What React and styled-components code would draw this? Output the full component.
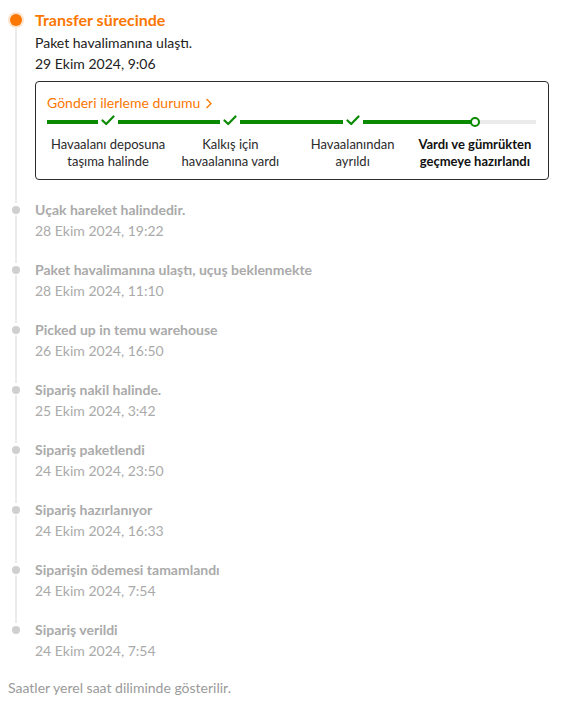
import styled, { createGlobalStyle } from 'styled-components';

const GlobalStyle = createGlobalStyle`
  body {
    margin: 0;
    background: #ffffff;
    font-family: 'Segoe UI', Lato, 'Open Sans', sans-serif;
  }
`;

const Page = styled.div`
  width: 561px;
  padding: 8px 0 0 8px;
  box-sizing: border-box;
`;

const Item = styled.div`
  position: relative;
  display: flex;
  gap: 11px;
  padding-bottom: ${(p) => (p.$first ? '19px' : p.$last ? '16px' : '18px')};

  &::before {
    content: '';
    display: ${(p) => (p.$last ? 'none' : 'block')};
    position: absolute;
    left: 7px;
    top: ${(p) => (p.$first ? '18px' : '16px')};
    bottom: -4px;
    width: 2px;
    background: #ebebeb;
  }
`;

const DotCol = styled.div`
  width: 16px;
  flex-shrink: 0;
  display: flex;
  justify-content: center;
  padding-top: ${(p) => (p.$active ? '6px' : '7px')};
`;

const Dot = styled.span`
  display: block;
  position: relative;
  z-index: 1;
  width: ${(p) => (p.$active ? '12px' : '8px')};
  height: ${(p) => (p.$active ? '12px' : '8px')};
  border-radius: 50%;
  background: ${(p) => (p.$active ? '#fb7701' : '#cfcfcf')};
  box-shadow: ${(p) => (p.$active ? '0 0 0 2px #fde3cc' : 'none')};
`;

const Body = styled.div`
  flex: 1;
  min-width: 0;
  padding-right: 12px;
`;

const ActiveTitle = styled.div`
  font-size: 16px;
  line-height: 24px;
  font-weight: 700;
  color: #fb7701;
`;

const Title = styled.div`
  font-size: 14px;
  line-height: 21px;
  font-weight: 700;
  color: #aaaaaa;
`;

const Line = styled.div`
  font-size: 14px;
  line-height: 21px;
  color: ${(p) => (p.$dark ? '#222222' : '#aaaaaa')};
`;

const Card = styled.div`
  margin-top: 7px;
  border: 1px solid #2b2b2b;
  border-radius: 4px;
  padding: 11px 12px 9px 11px;
`;

const CardHead = styled.div`
  display: flex;
  align-items: center;
  gap: 5px;
  font-size: 14px;
  line-height: 20px;
  color: #fb7701;
`;

const Steps = styled.div`
  display: grid;
  grid-template-columns: repeat(4, 1fr);
  margin-top: 4px;
`;

const Step = styled.div`
  display: flex;
  flex-direction: column;
  align-items: center;
`;

const Track = styled.div`
  position: relative;
  width: 100%;
  height: 10px;
  display: flex;
  justify-content: center;
  align-items: center;

  &::before,
  &::after {
    content: '';
    position: absolute;
    top: 3px;
    height: 4px;
  }
  &::before {
    left: 0;
    right: 50%;
    background: #0a8a00;
  }
  &::after {
    left: 50%;
    right: 0;
    background: ${(p) => (p.$done ? '#0a8a00' : '#ebebeb')};
  }
`;

const Check = styled.span`
  position: relative;
  z-index: 1;
  display: flex;
  align-items: center;
  justify-content: center;
  width: 20px;
  height: 14px;
  background: #ffffff;
  margin-top: -3px;
`;

const Ring = styled.span`
  position: relative;
  z-index: 1;
  width: 6px;
  height: 6px;
  border-radius: 50%;
  border: 2.5px solid #0a8a00;
  background: #ffffff;
`;

const StepLabel = styled.div`
  margin-top: 9px;
  text-align: center;
  white-space: nowrap;
  font-size: 13px;
  line-height: 17px;
  font-weight: ${(p) => (p.$current ? 700 : 400)};
  color: ${(p) => (p.$current ? '#111111' : '#2a2a2a')};
`;

const Note = styled.div`
  font-size: 14px;
  line-height: 21px;
  color: #9a9a9a;
`;

const steps = [
  { label: ['Havaalanı deposuna', 'taşıma halinde'] },
  { label: ['Kalkış için', 'havaalanına vardı'] },
  { label: ['Havaalanından', 'ayrıldı'] },
  { label: ['Vardı ve gümrükten', 'geçmeye hazırlandı'], current: true },
];

const history = [
  ['Uçak hareket halindedir.', '28 Ekim 2024, 19:22'],
  ['Paket havalimanına ulaştı, uçuş beklenmekte', '28 Ekim 2024, 11:10'],
  ['Picked up in temu warehouse', '26 Ekim 2024, 16:50'],
  ['Sipariş nakil halinde.', '25 Ekim 2024, 3:42'],
  ['Sipariş paketlendi', '24 Ekim 2024, 23:50'],
  ['Sipariş hazırlanıyor', '24 Ekim 2024, 16:33'],
  ['Siparişin ödemesi tamamlandı', '24 Ekim 2024, 7:54'],
  ['Sipariş verildi', '24 Ekim 2024, 7:54'],
];

const CheckIcon = () => (
  <svg width="14" height="11" viewBox="0 0 14 11">
    <polyline
      points="1.5,5.5 5.2,9 12.5,1.5"
      fill="none"
      stroke="#0a8a00"
      strokeWidth="2.2"
      strokeLinecap="round"
      strokeLinejoin="round"
    />
  </svg>
);

const Chevron = () => (
  <svg width="7" height="11" viewBox="0 0 7 11">
    <polyline
      points="1.5,1 6,5.5 1.5,10"
      fill="none"
      stroke="#fb7701"
      strokeWidth="1.3"
    />
  </svg>
);

const App = () => {
  return (
    <Page>
      <GlobalStyle />
      <Item $first>
        <DotCol $active>
          <Dot $active />
        </DotCol>
        <Body>
          <ActiveTitle>Transfer sürecinde</ActiveTitle>
          <Line $dark>Paket havalimanına ulaştı.</Line>
          <Line $dark>29 Ekim 2024, 9:06</Line>
          <Card>
            <CardHead>
              Gönderi ilerleme durumu <Chevron />
            </CardHead>
            <Steps>
              {steps.map((s, i) => (
                <Step key={i}>
                  <Track $done={!s.current}>
                    {s.current ? (
                      <Ring />
                    ) : (
                      <Check>
                        <CheckIcon />
                      </Check>
                    )}
                  </Track>
                  <StepLabel $current={s.current}>
                    {s.label[0]}
                    <br />
                    {s.label[1]}
                  </StepLabel>
                </Step>
              ))}
            </Steps>
          </Card>
        </Body>
      </Item>
      {history.map(([title, date], i) => (
        <Item key={i} $last={i === history.length - 1}>
          <DotCol>
            <Dot />
          </DotCol>
          <Body>
            <Title>{title}</Title>
            <Line>{date}</Line>
          </Body>
        </Item>
      ))}
      <Note>Saatler yerel saat diliminde gösterilir.</Note>
    </Page>
  );
};

export default App;
